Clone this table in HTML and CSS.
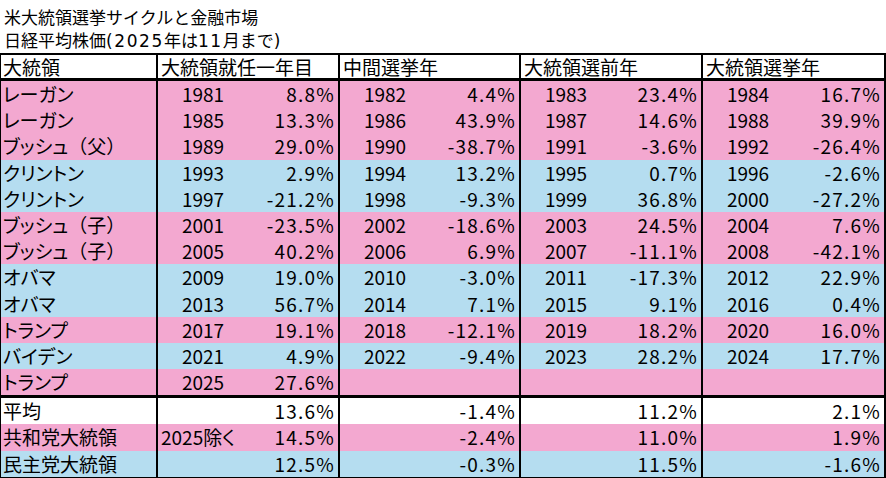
FILE: index.html
```html
<!DOCTYPE html>
<html lang="ja">
<head>
<meta charset="utf-8">
<title>米大統領選挙サイクルと金融市場</title>
<link rel="stylesheet" href="styles.css">
</head>
<body>
<div class="title">
  <div class="title-line">米大統領選挙サイクルと金融市場</div>
  <div class="title-line">日経平均株価<span class="lat">(2025</span>年は<span class="lat">11</span>月まで<span class="lat">)</span></div>
</div>
<div class="sheet">
  <div class="row head">
    <div class="c name">大統領</div>
    <div class="c grp">大統領就任一年目</div>
    <div class="c grp">中間選挙年</div>
    <div class="c grp">大統領選前年</div>
    <div class="c grp last">大統領選挙年</div>
  </div>

  <div class="row pink">
    <div class="c name">レーガン</div>
    <div class="c yr">1981</div><div class="c pct">8.8%</div>
    <div class="c yr">1982</div><div class="c pct">4.4%</div>
    <div class="c yr">1983</div><div class="c pct">23.4%</div>
    <div class="c yr">1984</div><div class="c pct last">16.7%</div>
  </div>
  <div class="row pink">
    <div class="c name">レーガン</div>
    <div class="c yr">1985</div><div class="c pct">13.3%</div>
    <div class="c yr">1986</div><div class="c pct">43.9%</div>
    <div class="c yr">1987</div><div class="c pct">14.6%</div>
    <div class="c yr">1988</div><div class="c pct last">39.9%</div>
  </div>
  <div class="row pink">
    <div class="c name">ブッシュ<span class="full">（父）</span></div>
    <div class="c yr">1989</div><div class="c pct">29.0%</div>
    <div class="c yr">1990</div><div class="c pct">-38.7%</div>
    <div class="c yr">1991</div><div class="c pct">-3.6%</div>
    <div class="c yr">1992</div><div class="c pct last">-26.4%</div>
  </div>
  <div class="row blue">
    <div class="c name">クリントン</div>
    <div class="c yr">1993</div><div class="c pct">2.9%</div>
    <div class="c yr">1994</div><div class="c pct">13.2%</div>
    <div class="c yr">1995</div><div class="c pct">0.7%</div>
    <div class="c yr">1996</div><div class="c pct last">-2.6%</div>
  </div>
  <div class="row blue">
    <div class="c name">クリントン</div>
    <div class="c yr">1997</div><div class="c pct">-21.2%</div>
    <div class="c yr">1998</div><div class="c pct">-9.3%</div>
    <div class="c yr">1999</div><div class="c pct">36.8%</div>
    <div class="c yr">2000</div><div class="c pct last">-27.2%</div>
  </div>
  <div class="row pink">
    <div class="c name">ブッシュ<span class="full">（子）</span></div>
    <div class="c yr">2001</div><div class="c pct">-23.5%</div>
    <div class="c yr">2002</div><div class="c pct">-18.6%</div>
    <div class="c yr">2003</div><div class="c pct">24.5%</div>
    <div class="c yr">2004</div><div class="c pct last">7.6%</div>
  </div>
  <div class="row pink">
    <div class="c name">ブッシュ<span class="full">（子）</span></div>
    <div class="c yr">2005</div><div class="c pct">40.2%</div>
    <div class="c yr">2006</div><div class="c pct">6.9%</div>
    <div class="c yr">2007</div><div class="c pct">-11.1%</div>
    <div class="c yr">2008</div><div class="c pct last">-42.1%</div>
  </div>
  <div class="row blue">
    <div class="c name">オバマ</div>
    <div class="c yr">2009</div><div class="c pct">19.0%</div>
    <div class="c yr">2010</div><div class="c pct">-3.0%</div>
    <div class="c yr">2011</div><div class="c pct">-17.3%</div>
    <div class="c yr">2012</div><div class="c pct last">22.9%</div>
  </div>
  <div class="row blue">
    <div class="c name">オバマ</div>
    <div class="c yr">2013</div><div class="c pct">56.7%</div>
    <div class="c yr">2014</div><div class="c pct">7.1%</div>
    <div class="c yr">2015</div><div class="c pct">9.1%</div>
    <div class="c yr">2016</div><div class="c pct last">0.4%</div>
  </div>
  <div class="row pink">
    <div class="c name">トランプ</div>
    <div class="c yr">2017</div><div class="c pct">19.1%</div>
    <div class="c yr">2018</div><div class="c pct">-12.1%</div>
    <div class="c yr">2019</div><div class="c pct">18.2%</div>
    <div class="c yr">2020</div><div class="c pct last">16.0%</div>
  </div>
  <div class="row blue">
    <div class="c name">バイデン</div>
    <div class="c yr">2021</div><div class="c pct">4.9%</div>
    <div class="c yr">2022</div><div class="c pct">-9.4%</div>
    <div class="c yr">2023</div><div class="c pct">28.2%</div>
    <div class="c yr">2024</div><div class="c pct last">17.7%</div>
  </div>
  <div class="row pink end">
    <div class="c name">トランプ</div>
    <div class="c yr">2025</div><div class="c pct">27.6%</div>
    <div class="c yr"></div><div class="c pct"></div>
    <div class="c yr"></div><div class="c pct"></div>
    <div class="c yr"></div><div class="c pct last"></div>
  </div>

  <div class="row white">
    <div class="c name">平均</div>
    <div class="c yr"></div><div class="c pct">13.6%</div>
    <div class="c yr"></div><div class="c pct">-1.4%</div>
    <div class="c yr"></div><div class="c pct">11.2%</div>
    <div class="c yr"></div><div class="c pct last">2.1%</div>
  </div>
  <div class="row pink">
    <div class="c name">共和党大統領</div>
    <div class="c yr note">2025除く</div><div class="c pct">14.5%</div>
    <div class="c yr"></div><div class="c pct">-2.4%</div>
    <div class="c yr"></div><div class="c pct">11.0%</div>
    <div class="c yr"></div><div class="c pct last">1.9%</div>
  </div>
  <div class="row blue bottom">
    <div class="c name">民主党大統領</div>
    <div class="c yr"></div><div class="c pct">12.5%</div>
    <div class="c yr"></div><div class="c pct">-0.3%</div>
    <div class="c yr"></div><div class="c pct">11.5%</div>
    <div class="c yr"></div><div class="c pct last">-1.6%</div>
  </div>
</div>
</body>
</html>
```

FILE: styles.css
```css
html, body {
  margin: 0;
  padding: 0;
  background: #ffffff;
}

body {
  width: 886px;
  height: 478px;
  overflow: hidden;
  color: #000000;
  font-family: "Noto Sans CJK JP", "Noto Sans", sans-serif;
}

.title {
  box-sizing: border-box;
  height: 53px;
  padding: 5px 0 0 4px;
  font-size: 17px;
  line-height: 23px;
}

.title .lat {
  font-family: "DejaVu Sans", "Noto Sans CJK JP", sans-serif;
  letter-spacing: 1.6px;
}

.sheet {
  width: 886px;
  font-size: 19px;
  font-feature-settings: "palt";
}

.row {
  display: grid;
  grid-template-columns: 156px 92px 90px 92px 89px 92px 90px 92px 93px;
  height: 26.2px;
  line-height: 26px;
}

.row.head {
  background: #ffffff;
  box-sizing: border-box;
  height: 28px;
  line-height: 23px;
  border-top: 2px solid #000;
  border-bottom: 3px solid #000;
}

.row.end {
  box-sizing: border-box;
  height: 29.2px;
  border-bottom: 3px solid #000;
}

.row.bottom {
  box-sizing: border-box;
  height: 28px;
  border-bottom: 2px solid #000;
}

.pink { background: #f3a8d0; }
.blue { background: #b5ddf0; }
.white { background: #ffffff; }

.c {
  box-sizing: border-box;
  white-space: nowrap;
}

.name {
  border-left: 1px solid #000;
  padding-left: 2px;
}

.name .full {
  font-feature-settings: normal;
}

.grp {
  grid-column: span 2;
  border-left: 2px solid #000;
  padding-left: 3px;
}

.yr {
  border-left: 2px solid #000;
  text-align: center;
}

.yr.note {
  text-align: left;
  padding-left: 3px;
}

.pct {
  text-align: right;
  padding-right: 3px;
  letter-spacing: 1.2px;
}

.last {
  border-right: 2px solid #000;
}
```
